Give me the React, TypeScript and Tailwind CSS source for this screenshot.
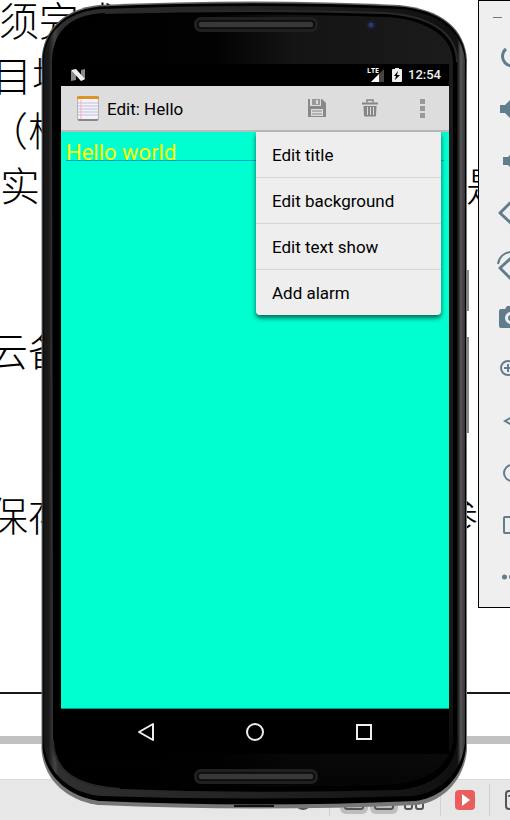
import React from "react";

const lines: { left: string; shift: string; right?: string; rightShift?: string }[] = [
  { left: "须完成", shift: "-ml-px" },
  { left: "目坪", shift: "-ml-2" },
  { left: "（根", shift: "-ml-3" },
  { left: "实", shift: "ml-0", right: "是", rightShift: "mr-1" },
  { left: "", shift: "ml-0" },
  { left: "", shift: "ml-0" },
  { left: "云备", shift: "-ml-3" },
  { left: "", shift: "ml-0" },
  { left: "", shift: "ml-0" },
  { left: "保存", shift: "-ml-3", right: "参", rightShift: "mr-8" },
];

function Document() {
  return (
    <main className="flex h-[779px] flex-col overflow-hidden bg-white">
      <div className="-mt-2 flex h-[702px] flex-col border-b-2 border-[#181818] font-['Noto_Sans_CJK_SC',sans-serif] text-[40px] font-light text-black">
        {lines.map((line, i) => (
          <p key={i} className="flex h-[55px] shrink-0 items-center justify-between whitespace-nowrap leading-[55px]">
            <span className={line.shift}>{line.left}</span>
            <span className={line.rightShift}>{line.right}</span>
          </p>
        ))}
      </div>
      <div className="mt-[42px] h-2 shrink-0 bg-[#c1c1c1]" />
    </main>
  );
}

function ViewIcon({ children }: { children: React.ReactNode }) {
  return (
    <svg viewBox="0 0 28 28" className="size-7" fill="none" stroke="#555" strokeWidth="2">
      {children}
    </svg>
  );
}

function BottomBar() {
  return (
    <footer className="flex h-[41px] items-center justify-end overflow-hidden border-t border-[#dcdcdc] bg-[#e7e7e7]">
      <button aria-label="Language" className="mr-3">
        <ViewIcon><circle cx="14" cy="15" r="8" /></ViewIcon>
      </button>
      <span className="mr-[10px] h-8 w-px bg-[#d0d0d0]" />
      <button aria-label="Print layout" className="mr-[2px] rounded-md bg-[#bdbdbd]">
        <ViewIcon><rect x="5" y="5" width="18" height="18" rx="2" /></ViewIcon>
      </button>
      <button aria-label="Web layout" className="mr-[2px] rounded-md bg-[#bdbdbd]">
        <ViewIcon><rect x="5" y="5" width="18" height="18" rx="2" /></ViewIcon>
      </button>
      <button aria-label="Reading view" className="mr-3">
        <ViewIcon><path d="M5 6h7v15q0 2-2 2H7q-2 0-2-2zM16 6h7v15q0 2-2 2h-3q-2 0-2-2z" /></ViewIcon>
      </button>
      <span className="mr-[14px] h-8 w-px bg-[#d0d0d0]" />
      <button aria-label="Play" className="mr-[14px] flex size-5 items-center justify-center rounded-sm bg-[#e85d5d]">
        <svg viewBox="0 0 20 20" className="size-5"><path d="M7 4l8 6-8 6z" fill="#fff" /></svg>
      </button>
      <span className="mr-[15px] h-8 w-px bg-[#d0d0d0]" />
      <button aria-label="Actual size" className="-mr-[23px] flex h-5 w-7 shrink-0 items-center rounded border-2 border-[#555] font-[Roboto,sans-serif] text-sm font-medium leading-4 text-[#333]">1:1</button>
    </footer>
  );
}

const tools: { name: string; art: React.ReactNode }[] = [
  { name: "Power", art: <path d="M7 4A9.500 9.500 0 1 0 19 4M13.500 1v9" fill="none" stroke="currentColor" strokeWidth="3" /> },
  { name: "Volume up", art: <path d="M1 8v8h5l7 7V1L6 8zM16 7a6 6 0 0 1 0 10z" /> },
  { name: "Volume down", art: <path d="M4 8v8h5l6 6V2L9 8z" /> },
  { name: "Rotate left", art: <path d="M1 12L11 2l13 14-9 9z" fill="none" stroke="currentColor" strokeWidth="3" strokeLinejoin="round" /> },
  { name: "Rotate right", art: <><path d="M1 15L12 5l12 11-11 11z" fill="none" stroke="currentColor" strokeWidth="3" strokeLinejoin="round" /><path d="M-1 11C0 4 5-1 13-1" fill="none" stroke="currentColor" strokeWidth="2" /></> },
  { name: "Take screenshot", art: <path fillRule="evenodd" d="M8 1L6 4H2a2 2 0 0 0-2 2v15a2 2 0 0 0 2 2h20a2 2 0 0 0 2-2V6a2 2 0 0 0-2-2h-4l-2-3zM12 7a6 6 0 1 1 0 12a6 6 0 0 1 0-12zm0 3a3 3 0 1 0 0 6a3 3 0 0 0 0-6z" /> },
  { name: "Zoom", art: <path d="M16 11a7 7 0 1 1-14 0a7 7 0 0 1 14 0zM9 7v8M5 11h8M14 16l7 7" fill="none" stroke="currentColor" strokeWidth="2" /> },
  { name: "Back", art: <path d="M6 12l14-8v16z" fill="none" stroke="currentColor" strokeWidth="2" /> },
  { name: "Home", art: <circle cx="13" cy="12" r="8" fill="none" stroke="currentColor" strokeWidth="2" /> },
  { name: "Overview", art: <rect x="5" y="4" width="16" height="16" rx="1" fill="none" stroke="currentColor" strokeWidth="2" /> },
  { name: "More", art: <path d="M3 12a2.500 2.500 0 1 0 5 0a2.500 2.500 0 1 0-5 0zM10 12a2.500 2.500 0 1 0 5 0a2.500 2.500 0 1 0-5 0z" /> },
];

function EmulatorToolbar() {
  return (
    <aside className="absolute left-[478px] top-0 flex h-[608px] w-16 flex-col border border-black bg-[#efefef] text-[#607d8b]">
      <button aria-label="Minimize" className="ml-3 flex h-[30px] w-6 items-center">
        <svg viewBox="0 0 24 24" className="size-6"><path d="M2 13.500h9" stroke="currentColor" strokeWidth="1" /></svg>
      </button>
      <div className="flex flex-col">
        {tools.map((tool) => (
          <button key={tool.name} aria-label={tool.name} className="flex h-[52px] items-center pl-5">
            <svg viewBox="0 0 24 24" className="size-6 overflow-visible" fill="currentColor">{tool.art}</svg>
          </button>
        ))}
      </div>
    </aside>
  );
}

function PhoneShell() {
  return (
    <svg viewBox="0 0 430 810" className="absolute inset-0 h-full w-full" aria-hidden="true">
      <defs>
        <linearGradient id="side" x1="0" x2="1" y1="0" y2="0">
          <stop offset="0" stopColor="#161616" />
          <stop offset="0.012" stopColor="#1a1a1a" />
          <stop offset="0.027" stopColor="#444" />
          <stop offset="0.035" stopColor="#303030" />
          <stop offset="0.500" stopColor="#222" />
          <stop offset="0.970" stopColor="#101010" />
          <stop offset="0.982" stopColor="#111" />
          <stop offset="0.990" stopColor="#555" />
          <stop offset="1" stopColor="#333" />
        </linearGradient>
        <linearGradient id="face" x1="0" x2="1" y1="0" y2="0">
          <stop offset="0" stopColor="#000" />
          <stop offset="0.400" stopColor="#020202" />
          <stop offset="0.600" stopColor="#141414" />
          <stop offset="1" stopColor="#1b1b1b" />
        </linearGradient>
        <linearGradient id="fade" x1="0" x2="0" y1="0" y2="1">
          <stop offset="0.800" stopColor="#000" stopOpacity="0" />
          <stop offset="1" stopColor="#000" stopOpacity="0.800" />
        </linearGradient>
        <linearGradient id="rim" x1="0" x2="0" y1="0" y2="1">
          <stop offset="0" stopColor="#666" />
          <stop offset="0.060" stopColor="#4a4a4a" />
          <stop offset="0.100" stopColor="#7c7c7c" />
          <stop offset="1" stopColor="#777" />
        </linearGradient>
      </defs>
      <path d="M425 270h3v41h-3zM425 337h3v96h-3z" fill="#888" />
      <path d="M0.500 60C2 32 20 9 58 5Q214-2 358 5C401 9 424 29 426 60V750C423 782 400 802 376 805Q214 812 58 805C26 801 3 780 0.500 750Z" fill="url(#rim)" />
      <path d="M1.500 60C3 33 21 10 59 6.500Q214 0 358 6.500C400 10 423 30 425 60V748C422 779 399 798 374 801Q214 808 59 801C27 797 4 776 1.500 748Z" fill="#000" />
      <path d="M2.500 60C4 34 23 12 60 9Q214 3 358 9C398 12 421 32 424 60V742C421 773 399 793 371 796Q214 801 60 796C27 793 5 771 2.500 742Z" fill="url(#side)" />
      <path d="M11 62C11 33 28 14 64 13Q214 9 343 13C385 15 416 31 416 62V740C414 770 390 788 355 790Q214 794 79 789C35 786 13 772 12 740Z" fill="#000" />
      <path d="M64 13Q214 9 343 13C385 15 416 31 416 62M12 740C13 772 35 786 79 789" fill="none" stroke="#292929" strokeWidth="2" />
      <path d="M14 62C15 36 32 18 66 17Q214 12 343 17C380 18 412 34 412 62V740C409 767 385 782 350 784Q214 789 79 786C36 784 15 767 14 740Z" fill="url(#face)" />
      <path d="M14 62H412V740C409 767 385 782 350 784Q214 789 79 786C36 784 15 767 14 740Z" fill="url(#fade)" />
      <path d="M193 806h40" stroke="#111" strokeWidth="2" />
      {[17, 769].map((y) => (
        <g key={y}>
          <rect x="153" y={y} width="124" height="15" rx="7" fill="#202020" />
          <rect x="157" y={y + 4} width="116" height="7" rx="3" fill="#383838" stroke="#080808" strokeWidth="1.500" />
        </g>
      ))}
      <circle cx="330" cy="25" r="5" fill="#171d2c" />
      <circle cx="330" cy="25" r="2.500" fill="#2c3960" />
    </svg>
  );
}

function StatusBar() {
  return (
    <div className="flex h-[22px] items-center bg-black pl-[10px] pr-2 text-white">
      <svg viewBox="0 0 15 12" className="h-3 w-[15px]">
        <path d="M0 2l5-1v10l-5 1zM10 1l4-1v10l-4 2z" fill="#888" />
        <path d="M0 1L5 0l9 10-4 2z" fill="#eee" />
      </svg>
      <span className="ml-auto self-start pt-[3px] font-['Open_Sans',sans-serif] text-[7px] font-bold leading-[8px]">LTE</span>
      <svg viewBox="0 0 13 13" className="-ml-2 size-[13px]">
        <path d="M13 0v13H0z" fill="#444" />
        <path d="M8 5v8H0z" fill="#fff" />
      </svg>
      <svg viewBox="0 0 10 14" className="ml-2 h-[14px] w-[10px]">
        <path d="M3 0h4v1h2q1 0 1 1v11q0 1-1 1H1q-1 0-1-1V2q0-1 1-1h2z" fill="#eee" />
        <path d="M6 3L2 8h2l-1 4 5-5H5z" fill="#000" />
      </svg>
      <span className="ml-[6px] font-[Roboto,sans-serif] text-[13px] font-medium leading-[22px] text-[#eee]">12:54</span>
    </div>
  );
}

function ActionBar() {
  return (
    <header className="flex h-[46px] items-center border-b-2 border-[#bcbcbc] bg-[#ddd] pl-4">
      <svg viewBox="0 0 22 26" className="h-[26px] w-[22px]">
        <rect x="0.500" y="1" width="21" height="25" rx="2" fill="#888" />
        <rect x="1" y="1" width="20" height="23" rx="1" fill="#f5f3fa" />
        <path d="M0 4V2q0-1 2-1h18q2 0 2 1v2z" fill="#dc9525" />
        <path d="M1 8h20M1 11h20M1 14h20M1 17h20M1 20h20" stroke="#bfbddd" />
        <path d="M4 5v19" stroke="#f2b3b8" />
      </svg>
      <h1 className="ml-2 pt-[2px] font-[Roboto,sans-serif] text-[17px] leading-6 text-black">Edit: Hello</h1>
      <button aria-label="Save" className="ml-auto flex w-[53px] justify-center">
        <svg viewBox="0 0 18 18" className="size-[18px]">
          <path fillRule="evenodd" d="M0 0h2v7h11V0h1l4 4v14H0zM3 10v7h12v-7z" fill="#888" />
          <path fillRule="evenodd" d="M4 0h8v6H4zM8 1v4h2V1z" fill="#999" />
          <path d="M4 12h10M4 15h10" stroke="#888" />
        </svg>
      </button>
      <button aria-label="Delete" className="flex w-[53px] justify-center">
        <svg viewBox="0 0 16 18" className="h-[18px] w-4" fill="none" stroke="#858585">
          <path d="M5 3.500V1h6v2.500" strokeWidth="1.500" />
          <path d="M0 4.500h16" strokeWidth="2" />
          <path d="M1.500 7h13l-.5 9.500q0 1-1 1h-10q-1 0-1-1z" fill="#858585" stroke="none" />
          <path d="M5.500 8v8M8.500 8v8M11.500 8v8" stroke="#ddd" />
        </svg>
      </button>
      <button aria-label="More options" className="flex w-[53px] justify-center">
        <svg viewBox="0 0 5 19" className="h-[19px] w-[5px]"><path d="M0 0h5v5H0zM0 7h5v5H0zM0 14h5v5H0z" fill="#999" /></svg>
      </button>
    </header>
  );
}

function OptionsMenu() {
  return (
    <ul role="menu" className="absolute right-2 top-0 w-[185px] rounded-b-sm bg-[#eee] shadow-[0_3px_5px_rgba(0,0,0,0.600)]">
      {["Edit title", "Edit background", "Edit text show", "Add alarm"].map((item) => (
        <li key={item} role="none" className="border-b border-[#d6d6d6] last:border-b-0">
          <button role="menuitem" className="block h-[45px] w-full px-4 pt-[2px] text-left font-[Roboto,sans-serif] text-[17px] text-black">{item}</button>
        </li>
      ))}
    </ul>
  );
}

function Phone() {
  return (
    <section className="absolute left-[41px] top-0 h-[810px] w-[430px]">
      <PhoneShell />
      <div className="relative ml-5 mt-16 flex h-[690px] w-[388px] flex-col">
        <StatusBar />
        <ActionBar />
        <div className="relative flex-1 border-b border-[#009b80] bg-[#00ffd0] px-[5px]">
          <textarea
            aria-label="Note"
            defaultValue="Hello world"
            rows={1}
            className="block h-[29px] w-full resize-none overflow-hidden whitespace-nowrap border-b border-[#00a8d0] pt-2 font-[Roboto,sans-serif] text-[22px] leading-[26px] text-[#ffff00] outline-none"
          />
          <OptionsMenu />
        </div>
        <nav className="flex h-[45px] items-center justify-center gap-[85px] bg-black">
          <button aria-label="Back">
            <svg viewBox="0 0 24 24" className="size-6" fill="none" stroke="#eee" strokeWidth="2"><path d="M5 12L19 4v16z" strokeLinejoin="round" /></svg>
          </button>
          <button aria-label="Home">
            <svg viewBox="0 0 24 24" className="size-6" fill="none" stroke="#eee" strokeWidth="2"><circle cx="12" cy="12" r="8" /></svg>
          </button>
          <button aria-label="Recent apps">
            <svg viewBox="0 0 24 24" className="size-6" fill="none" stroke="#eee" strokeWidth="2"><rect x="5" y="5" width="14" height="14" /></svg>
          </button>
        </nav>
      </div>
    </section>
  );
}

export default function App() {
  return (
    <div className="relative overflow-hidden bg-white">
      <Document />
      <BottomBar />
      <EmulatorToolbar />
      <Phone />
    </div>
  );
}
